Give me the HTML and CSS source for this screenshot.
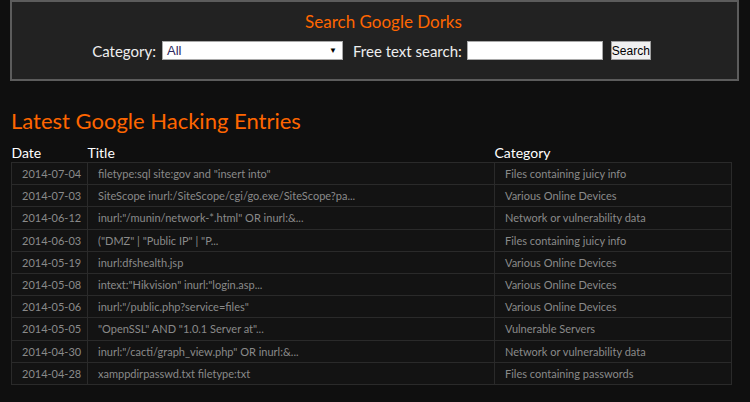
FILE: index.html
```html
<!DOCTYPE html>
<html lang="en">

<head>
    <meta charset="UTF-8">
    <meta name="viewport" content="width=device-width, initial-scale=1.0">
    <title>Google Hacking Database</title>
    <link rel="stylesheet" href="styles.css">
</head>

<body>
    <div class="search-box">
        <h2>Search Google Dorks</h2>
        <form class="search-form">
            <label>Category:</label>
            <div class="select">
                <span>All</span>
                <span class="arrow">&#9660;</span>
            </div>
            <label>Free text search:</label>
            <input type="text" class="text-input">
            <button type="button" class="btn">Search</button>
        </form>
    </div>

    <h1>Latest Google Hacking Entries</h1>

    <table class="entries">
        <thead>
            <tr>
                <th class="col-date">Date</th>
                <th class="col-title">Title</th>
                <th class="col-cat">Category</th>
            </tr>
        </thead>
        <tbody>
            <tr><td>2014-07-04</td><td>filetype:sql site:gov and "insert into"</td><td>Files containing juicy info</td></tr>
            <tr><td>2014-07-03</td><td>SiteScope inurl:/SiteScope/cgi/go.exe/SiteScope?pa...</td><td>Various Online Devices</td></tr>
            <tr><td>2014-06-12</td><td>inurl:"/munin/network-*.html" OR inurl:&amp;...</td><td>Network or vulnerability data</td></tr>
            <tr><td>2014-06-03</td><td>("DMZ" | "Public IP" | "P...</td><td>Files containing juicy info</td></tr>
            <tr><td>2014-05-19</td><td>inurl:dfshealth.jsp</td><td>Various Online Devices</td></tr>
            <tr><td>2014-05-08</td><td>intext:"Hikvision" inurl:"login.asp...</td><td>Various Online Devices</td></tr>
            <tr><td>2014-05-06</td><td>inurl:"/public.php?service=files"</td><td>Various Online Devices</td></tr>
            <tr><td>2014-05-05</td><td>"OpenSSL" AND "1.0.1 Server at"...</td><td>Vulnerable Servers</td></tr>
            <tr><td>2014-04-30</td><td>inurl:"/cacti/graph_view.php" OR inurl:&amp;...</td><td>Network or vulnerability data</td></tr>
            <tr><td>2014-04-28</td><td>xamppdirpasswd.txt filetype:txt</td><td>Files containing passwords</td></tr>
        </tbody>
    </table>
</body>

</html>
```

FILE: styles.css
```css
body {
    margin: 0;
    background: #0f0f0f;
    font-family: "Lato", "Open Sans", sans-serif;
    color: #ddd;
}

.search-box {
    margin: 0 11px 0 10px;
    height: 77px;
    background: #222;
    border: 2px solid #5c5c5c;
    text-align: center;
}

.search-box h2 {
    margin: 10px 0 0;
    padding-left: 18px;
    font-size: 17px;
    font-weight: normal;
    line-height: 20px;
    color: #ff6600;
}

.search-form {
    display: flex;
    justify-content: center;
    align-items: center;
    margin-top: 9px;
    padding-right: 6px;
    font-size: 15px;
    color: #eee;
}

.search-form label {
    margin-right: 6px;
}

.select {
    display: flex;
    justify-content: space-between;
    align-items: center;
    width: 170px;
    height: 15px;
    padding: 1px 5px 1px 4px;
    margin-right: 10px;
    background: #fff;
    border: 1px solid #a9a9a9;
    color: #2e2860;
    font-family: "Liberation Sans", Arial, sans-serif;
    font-size: 13px;
    text-align: left;
}

.select .arrow {
    font-size: 8px;
    color: #000;
}

.text-input {
    width: 130px;
    height: 15px;
    padding: 1px 2px;
    margin: 0 8px 0 -1px;
    border: 1px solid #a9a9a9;
    background: #fff;
}

.btn {
    width: 40px;
    height: 19px;
    padding: 0;
    font-family: "Liberation Sans", Arial, sans-serif;
    font-size: 12px;
    color: #000;
    background: #f0f0f0;
    border: 1px solid #a0a0a0;
}

h1 {
    margin: 27px 0 0 11px;
    font-size: 22px;
    font-weight: normal;
    line-height: 26px;
    color: #ff6600;
}

.entries {
    margin: 10px 0 0 11px;
    width: 721px;
    table-layout: fixed;
    border-collapse: collapse;
    font-size: 11px;
}

.entries th {
    padding: 0;
    text-align: left;
    font-size: 14px;
    font-weight: normal;
    color: #fff;
    line-height: 18px;
}

.col-date { width: 76px; }
.col-title { width: 407px; }

.entries td {
    height: 21.2px;
    padding: 0 10px;
    background: #131313;
    border: 1px solid #2a2a2a;
    color: #8a8a8a;
    white-space: nowrap;
    overflow: hidden;
}
```
